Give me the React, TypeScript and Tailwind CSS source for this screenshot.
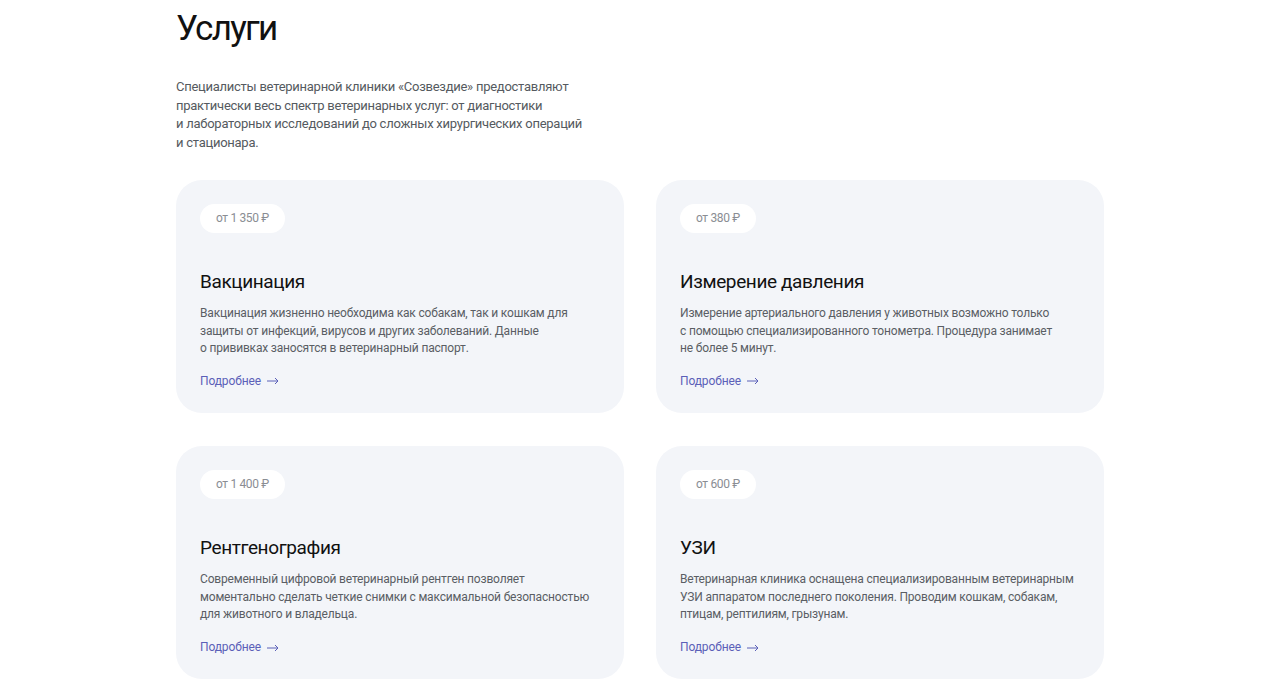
const SERVICES = [
  {
    price: "от 1 350 ₽",
    title: "Вакцинация",
    lines: [
      "Вакцинация жизненно необходима как собакам, так и кошкам для",
      "защиты от инфекций, вирусов и других заболеваний. Данные",
      "о прививках заносятся в ветеринарный паспорт.",
    ],
  },
  {
    price: "от 380 ₽",
    title: "Измерение давления",
    lines: [
      "Измерение артериального давления у животных возможно только",
      "с помощью специализированного тонометра. Процедура занимает",
      "не более 5 минут.",
    ],
  },
  {
    price: "от 1 400 ₽",
    title: "Рентгенография",
    lines: [
      "Современный цифровой ветеринарный рентген позволяет",
      "моментально сделать четкие снимки с максимальной безопасностью",
      "для животного и владельца.",
    ],
  },
  {
    price: "от 600 ₽",
    title: "УЗИ",
    lines: [
      "Ветеринарная клиника оснащена специализированным ветеринарным",
      "УЗИ аппаратом последнего поколения. Проводим кошкам, собакам,",
      "птицам, рептилиям, грызунам.",
    ],
  },
];

const INTRO = [
  "Специалисты ветеринарной клиники «Созвездие» предоставляют",
  "практически весь спектр ветеринарных услуг: от диагностики",
  "и лабораторных исследований до сложных хирургических операций",
  "и стационара.",
];

function Arrow() {
  return (
    <svg width="12" height="8" viewBox="0 0 12 8" fill="none" className="mt-[1px]">
      <path d="M0 4h11M8 1l3 3-3 3" stroke="currentColor" strokeWidth="1" />
    </svg>
  );
}

export default function App() {
  return (
    <div className="min-h-[692px] bg-white font-['Roboto',sans-serif] antialiased">
      <div className="ml-[176px] w-[928px] pt-[6px]">
        {/* ── Header ───────────────────────────────────── */}
        <h1 className="text-[35px] leading-[46px] tracking-[-0.05em] text-[#111]">
          Услуги
        </h1>
        <p className="mt-[26px] text-[13px] leading-[18.7px] tracking-[-0.02em] text-[#555a60]">
          {INTRO.map((l, i) => (
            <span key={i} className="block whitespace-nowrap">
              {l}
            </span>
          ))}
        </p>

        {/* ── Cards ────────────────────────────────────── */}
        <div className="mt-[27px] grid grid-cols-2 gap-x-8 gap-y-[33px]">
          {SERVICES.map((s) => (
            <div
              key={s.title}
              className="rounded-[26px] bg-[#f3f5f9] px-6 pt-6 pb-[21px]"
            >
              <div className="inline-flex h-[29px] items-center rounded-full bg-white px-4 text-[12px] tracking-[-0.03em] text-[#8a8d93]">
                {s.price}
              </div>
              <h3 className="mt-[37px] text-[19px] leading-[24px] tracking-[-0.02em] text-[#111]">
                {s.title}
              </h3>
              <p className="mt-[11px] text-[12px] leading-[17.7px] tracking-[-0.015em] text-[#5a5e64]">
                {s.lines.map((l, i) => (
                  <span key={i} className="block whitespace-nowrap">
                    {l}
                  </span>
                ))}
              </p>
              <a
                href="#"
                className="mt-[14px] inline-flex items-center gap-[6px] text-[12px] leading-[18px] tracking-[-0.01em] text-[#5b60b8]"
              >
                Подробнее <Arrow />
              </a>
            </div>
          ))}
        </div>
      </div>
    </div>
  );
}
